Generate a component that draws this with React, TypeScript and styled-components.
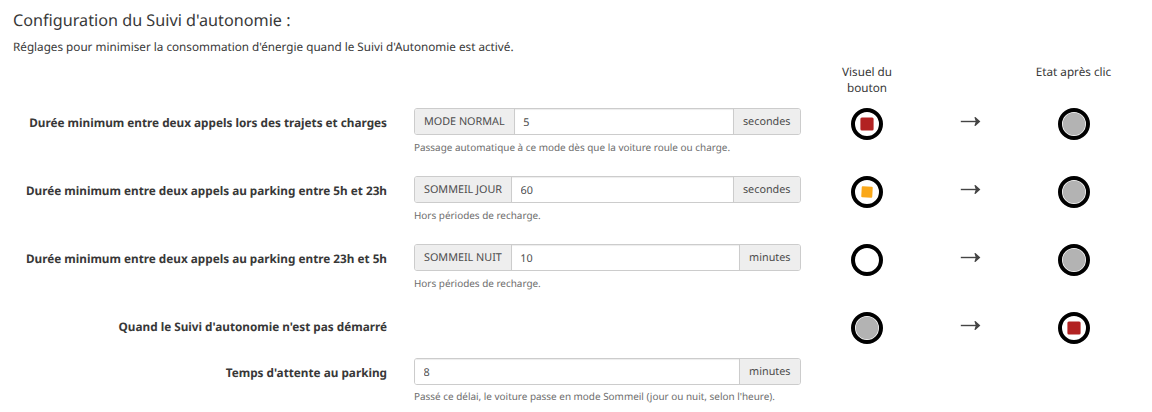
import React from "react";
import styled, { createGlobalStyle } from "styled-components";

const GlobalStyle = createGlobalStyle`
  *, *::before, *::after { box-sizing: border-box; }
  body {
    margin: 0;
    background: #fff;
    color: #383838;
    font-family: "Noto Sans", sans-serif;
    font-size: 11.71px;
    line-height: 16px;
    text-rendering: geometricPrecision;
  }
`;

const Page = styled.main`
  height: 412px;
  padding: 8px 13px 0;
  overflow: hidden;
`;

const Title = styled.h1`
  margin: 0;
  font-size: 16.2px;
  font-weight: 400;
  line-height: 24px;
`;

const Intro = styled.p`
  margin: 7px 0 9px;
`;

const Row = styled.div<{ $height: number }>`
  display: grid;
  grid-template-columns: 374px 387px 310px;
  column-gap: 27px;
  height: ${(p) => p.$height}px;
  align-items: start;
`;

const Label = styled.label`
  padding-top: 7px;
  font-size: 11.76px;
  font-weight: 700;
  text-align: right;
  white-space: nowrap;
`;

const Group = styled.div`
  display: flex;
  height: 27px;
  border: 1px solid #ccc;
  border-radius: 3px;
  overflow: hidden;
`;

const Addon = styled.span<{ $side: "left" | "right" }>`
  flex: none;
  padding: 5px 9px 0;
  ${(p) => p.$side === "right" && "padding-right: 9.5px;"}
  background: #eee;
  color: #4c4c4c;
  font-size: 10.8px;
  white-space: nowrap;
  border-${(p) => (p.$side === "left" ? "right" : "left")}: 1px solid #ccc;
`;

const Input = styled.input`
  flex: 1;
  min-width: 0;
  padding: 2px 8.5px 0;
  border: 0;
  outline: 0;
  background: #fff;
  box-shadow: inset 0 1px 1px rgba(0, 0, 0, 0.075);
  color: #4c4c4c;
  font: 10.8px "Noto Sans", sans-serif;
  text-rendering: inherit;
`;

const Help = styled.p<{ $tight: boolean }>`
  margin: ${(p) => (p.$tight ? 4 : 5)}px 0 0;
  color: #6c6c6c;
  font-size: 9.94px;
  line-height: 15px;
  white-space: nowrap;
`;

const States = styled.div`
  display: grid;
  grid-template-columns: 104px 103px 103px;
  justify-items: center;
  margin-left: -13px;
`;

const Heading = styled.span`
  width: 78px;
  text-align: center;
`;

const ArrowIcon = styled.svg`
  display: block;
  margin-top: 8px;
`;

const ButtonIcon = styled.svg`
  display: block;
`;

type Kind = "red" | "orange" | "empty" | "grey";

function StateButton({ kind }: { kind: Kind }) {
  return (
    <ButtonIcon width="32" height="32" viewBox="0 0 32 32">
      <circle cx="16" cy="16" r="14" fill="#fff" stroke="#000" strokeWidth="4" />
      {kind === "grey" && <circle cx="16" cy="16" r="11.3" fill="#b3b3b3" />}
      {kind === "red" && (
        <rect x="9.4" y="9.4" width="13.2" height="13.2" rx="1.5" fill="#b22222" />
      )}
      {kind === "orange" && (
        <rect x="10.5" y="10.5" width="11" height="11" rx="1" fill="#faa819" transform="rotate(3 16 16)" />
      )}
    </ButtonIcon>
  );
}

function Arrow() {
  return (
    <ArrowIcon width="21" height="11" viewBox="0 0 21 11">
      <path d="M0.8 5.5H18" fill="none" stroke="#444" strokeWidth="1.4" />
      <path d="M14.4 1.2L15.4 1L20.4 5.5L15.4 10L14.4 9.8L15.8 5.5Z" fill="#444" />
    </ArrowIcon>
  );
}

interface Setting {
  label: string;
  height: number;
  mode?: string;
  value?: string;
  unit?: string;
  help?: string;
  states?: [Kind, Kind];
}

const settings: Setting[] = [
  {
    label: "Durée minimum entre deux appels lors des trajets et charges",
    height: 68,
    mode: "MODE NORMAL",
    value: "5",
    unit: "secondes",
    help: "Passage automatique à ce mode dès que la voiture roule ou charge.",
    states: ["red", "grey"],
  },
  {
    label: "Durée minimum entre deux appels au parking entre 5h et 23h",
    height: 68,
    mode: "SOMMEIL JOUR",
    value: "60",
    unit: "secondes",
    help: "Hors périodes de recharge.",
    states: ["orange", "grey"],
  },
  {
    label: "Durée minimum entre deux appels au parking entre 23h et 5h",
    height: 68,
    mode: "SOMMEIL NUIT",
    value: "10",
    unit: "minutes",
    help: "Hors périodes de recharge.",
    states: ["empty", "grey"],
  },
  {
    label: "Quand le Suivi d'autonomie n'est pas démarré",
    height: 46,
    states: ["grey", "red"],
  },
  {
    label: "Temps d'attente au parking",
    height: 50,
    value: "8",
    unit: "minutes",
    help: "Passé ce délai, le voiture passe en mode Sommeil (jour ou nuit, selon l'heure).",
  },
];

export default function App() {
  return (
    <>
      <GlobalStyle />
      <Page>
        <Title>Configuration du Suivi d'autonomie :</Title>
        <Intro>
          Réglages pour minimiser la consommation d'énergie quand le Suivi d'Autonomie est activé.
        </Intro>
        <Row $height={44}>
          <span />
          <span />
          <States>
            <Heading>Visuel du bouton</Heading>
            <span />
            <Heading>Etat après clic</Heading>
          </States>
        </Row>
        {settings.map((s) => (
          <Row key={s.label} $height={s.height}>
            <Label>{s.label}</Label>
            <div>
              {s.value && (
                <>
                  <Group>
                    {s.mode && <Addon $side="left">{s.mode}</Addon>}
                    <Input defaultValue={s.value} aria-label={s.label} />
                    <Addon $side="right">{s.unit}</Addon>
                  </Group>
                  <Help $tight={!s.mode}>{s.help}</Help>
                </>
              )}
            </div>
            {s.states && (
              <States>
                <StateButton kind={s.states[0]} />
                <Arrow />
                <StateButton kind={s.states[1]} />
              </States>
            )}
          </Row>
        ))}
      </Page>
    </>
  );
}
